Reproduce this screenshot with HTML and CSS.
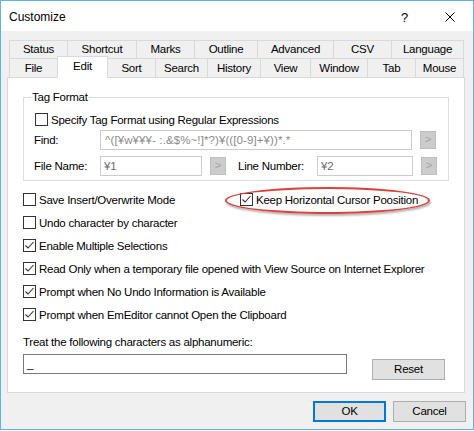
FILE: index.html
```html
<!DOCTYPE html>
<html>
<head>
<meta charset="utf-8">
<title>Customize</title>
<link rel="stylesheet" href="styles.css">
</head>
<body>
<div class="window">
  <div class="titlebar">
    <span class="title">Customize</span>
    <span class="help">?</span>
    <span class="close"><svg width="10" height="10" viewBox="0 0 10 10"><path d="M0.5 0.5L9.5 9.5M9.5 0.5L0.5 9.5" stroke="#000" stroke-width="1" fill="none"/></svg></span>
  </div>
  <div class="client">
    <div class="tabs">
      <div class="tabrow top">
        <div class="tab t-status">Status</div>
        <div class="tab t-shortcut">Shortcut</div>
        <div class="tab t-marks">Marks</div>
        <div class="tab t-outline">Outline</div>
        <div class="tab t-advanced">Advanced</div>
        <div class="tab t-csv">CSV</div>
        <div class="tab t-language last">Language</div>
      </div>
      <div class="tabrow bottom">
        <div class="tab t-file">File</div>
        <div class="tab t-edit selected">Edit</div>
        <div class="tab t-sort">Sort</div>
        <div class="tab t-search">Search</div>
        <div class="tab t-history">History</div>
        <div class="tab t-view">View</div>
        <div class="tab t-window">Window</div>
        <div class="tab t-tab">Tab</div>
        <div class="tab t-mouse last">Mouse</div>
      </div>
    </div>
    <div class="page">
      <fieldset class="group">
        <legend>Tag Format</legend>
        <div class="cbrow">
          <span class="cb"></span><span class="cblabel">Specify Tag Format using Regular Expressions</span>
        </div>
        <div class="frow">
          <span class="flabel">Find:</span>
          <span class="field f-find">^([¥w¥¥¥- :.&amp;$%~!]*?)¥(([0-9]+¥))*.*</span>
          <span class="pick">&gt;</span>
        </div>
        <div class="frow second">
          <span class="flabel">File Name:</span>
          <span class="field f-file">¥1</span>
          <span class="pick">&gt;</span>
          <span class="flabel l-line">Line Number:</span>
          <span class="field f-line">¥2</span>
          <span class="pick">&gt;</span>
        </div>
      </fieldset>
      <div class="options">
        <div class="optrow">
          <div class="opt col1"><span class="cb"></span><span class="cblabel">Save Insert/Overwrite Mode</span></div>
          <div class="opt"><span class="cb"><svg width="11" height="11" viewBox="0 0 11 11"><path d="M1.5 5.5L4 8L9.5 2" stroke="#333" stroke-width="1.1" fill="none"/></svg></span><span class="cblabel">Keep Horizontal Cursor Poosition</span></div>
        </div>
        <div class="optrow">
          <div class="opt"><span class="cb"></span><span class="cblabel">Undo character by character</span></div>
        </div>
        <div class="optrow">
          <div class="opt"><span class="cb"><svg width="11" height="11" viewBox="0 0 11 11"><path d="M1.5 5.5L4 8L9.5 2" stroke="#333" stroke-width="1.1" fill="none"/></svg></span><span class="cblabel">Enable Multiple Selections</span></div>
        </div>
        <div class="optrow">
          <div class="opt"><span class="cb"><svg width="11" height="11" viewBox="0 0 11 11"><path d="M1.5 5.5L4 8L9.5 2" stroke="#333" stroke-width="1.1" fill="none"/></svg></span><span class="cblabel">Read Only when a temporary file opened with View Source on Internet Explorer</span></div>
        </div>
        <div class="optrow">
          <div class="opt"><span class="cb"><svg width="11" height="11" viewBox="0 0 11 11"><path d="M1.5 5.5L4 8L9.5 2" stroke="#333" stroke-width="1.1" fill="none"/></svg></span><span class="cblabel">Prompt when No Undo Information is Available</span></div>
        </div>
        <div class="optrow">
          <div class="opt"><span class="cb"><svg width="11" height="11" viewBox="0 0 11 11"><path d="M1.5 5.5L4 8L9.5 2" stroke="#333" stroke-width="1.1" fill="none"/></svg></span><span class="cblabel">Prompt when EmEditor cannot Open the Clipboard</span></div>
        </div>
      </div>
      <div class="treat">Treat the following characters as alphanumeric:</div>
      <div class="treatrow">
        <span class="alnum">_</span>
        <span class="btn reset">Reset</span>
      </div>
    </div>
    <div class="buttons">
      <span class="btn ok">OK</span>
      <span class="btn">Cancel</span>
    </div>
  </div>
  <div class="highlight"></div>
</div>
</body>
</html>
```
FILE: styles.css
```css
html, body {
  margin: 0;
  padding: 0;
  background: #ffffff;
}
body {
  font-family: "Liberation Sans", Arial, sans-serif;
  font-size: 11.5px;
  letter-spacing: -0.25px;
  color: #000;
}
.window {
  position: relative;
  width: 474px;
  height: 430px;
  box-sizing: border-box;
  border: 1px solid #5fb2ef;
  display: flex;
  flex-direction: column;
}
.titlebar {
  height: 30px;
  background: #fff;
  display: flex;
  align-items: center;
  flex: none;
}
.title {
  margin-left: 8px;
  font-size: 12px;
  letter-spacing: 0;
  margin-top: 2px;
}
.help {
  margin-left: auto;
  font-size: 13px;
  margin-top: 2px;
}
.close {
  display: flex;
  margin-left: 37px;
  margin-right: 18px;
  margin-top: 2px;
}
.client {
  flex: 1;
  background: #f0f0f0;
  padding-top: 9px;
}
.tabs {
  margin-left: 8px;
  width: 455px;
}
.tabrow {
  display: flex;
  align-items: flex-end;
}
.tabrow.top { height: 18px; }
.tabrow.bottom { height: 19px; }
.tab {
  box-sizing: border-box;
  border-top: 1px solid #d9d9d9;
  border-left: 1px solid #d9d9d9;
  background: #f0f0f0;
  text-align: center;
  flex: none;
}
.tabrow.top .tab { height: 18px; line-height: 17px; }
.tabrow.bottom .tab { height: 19px; line-height: 18px; }
.tab.last { border-right: 1px solid #d9d9d9; }
.t-status { width: 58px; }
.t-shortcut { width: 69px; }
.t-marks { width: 58px; }
.t-outline { width: 63px; }
.t-advanced { width: 76px; }
.t-csv { width: 58px; }
.t-language { width: 73px; }
.t-file { width: 48px; }
.t-edit { width: 51px; }
.t-sort { width: 47px; }
.t-search { width: 52px; }
.t-history { width: 53px; }
.t-view { width: 50px; }
.t-window { width: 57px; }
.t-tab { width: 48px; }
.t-mouse { width: 49px; }
.tabrow.bottom .tab.selected {
  position: relative;
  z-index: 2;
  background: #fff;
  height: 22px;
  line-height: 18px;
  margin-bottom: -1px;
  border-right: 1px solid #d9d9d9;
}
.tab.selected + .tab { border-left: none; }
.page {
  margin-left: 6px;
  width: 458px;
  height: 316px;
  box-sizing: border-box;
  background: #fff;
  border: 1px solid #d9d9d9;
  padding: 0 15px;
}
.group {
  margin: 12px 0 0 0;
  border: 1px solid #dcdcdc;
  padding: 7px 12px 4px 11px;
  min-width: 0;
}
.group legend {
  padding: 0 1px;
  margin-left: -4px;
  line-height: 15px;
}
.cbrow {
  display: flex;
  align-items: center;
  height: 15px;
}
.cb {
  box-sizing: border-box;
  width: 13px;
  height: 13px;
  border: 1px solid #333;
  background: #fff;
  flex: none;
  display: flex;
}
.cblabel {
  margin-left: 3px;
  white-space: nowrap;
}
.frow {
  display: flex;
  align-items: center;
  height: 20px;
  margin-top: 3px;
  margin-left: -1px;
}
.frow.second { margin-top: 6px; }
.flabel {
  width: 66px;
  flex: none;
}
.field {
  box-sizing: border-box;
  height: 20px;
  line-height: 18px;
  border: 1px solid #cccccc;
  background: #fff;
  color: #6d6d6d;
  padding-left: 3px;
  white-space: nowrap;
  overflow: hidden;
  flex: none;
}
.f-find { width: 312px; color: #8a8a8a; padding-left: 4px; letter-spacing: 0.1px; }
.f-file { width: 102px; }
.f-line { width: 96px; }
.pick {
  box-sizing: border-box;
  width: 16px;
  height: 18px;
  margin-left: 8px;
  background: #cccccc;
  border: 1px solid #bfbfbf;
  color: #a3a3a3;
  text-align: center;
  line-height: 15px;
  flex: none;
}
.l-line {
  margin-left: 12px;
  width: 79px;
}
.options {
  margin-top: 7px;
}
.optrow {
  display: flex;
  align-items: center;
  height: 23px;
}
.opt {
  display: flex;
  align-items: center;
}
.opt.col1 {
  width: 217px;
}
.treat {
  margin-top: 9px;
  line-height: 15px;
}
.treatrow {
  display: flex;
  align-items: flex-start;
  margin-top: 4px;
}
.alnum {
  box-sizing: border-box;
  width: 324px;
  height: 20px;
  border: 1px solid #7a7a7a;
  line-height: 18px;
  padding-left: 3px;
}
.btn {
  box-sizing: border-box;
  display: inline-block;
  width: 73px;
  height: 21px;
  line-height: 19px;
  text-align: center;
  background: #e1e1e1;
  border: 1px solid #adadad;
}
.reset {
  margin-left: 25px;
  margin-top: 5px;
}
.buttons {
  display: flex;
  justify-content: flex-end;
  gap: 7px;
  padding-right: 7px;
  margin-top: 8px;
}
.btn.ok {
  border: 2px solid #0078d7;
  line-height: 17px;
}
.highlight {
  position: absolute;
  left: 224px;
  top: 186px;
  width: 205px;
  height: 27px;
  box-sizing: border-box;
  border: 2.5px solid #e0403b;
  border-radius: 50%;
  box-shadow: 1px 2px 2px rgba(0,0,0,0.28);
}
```
